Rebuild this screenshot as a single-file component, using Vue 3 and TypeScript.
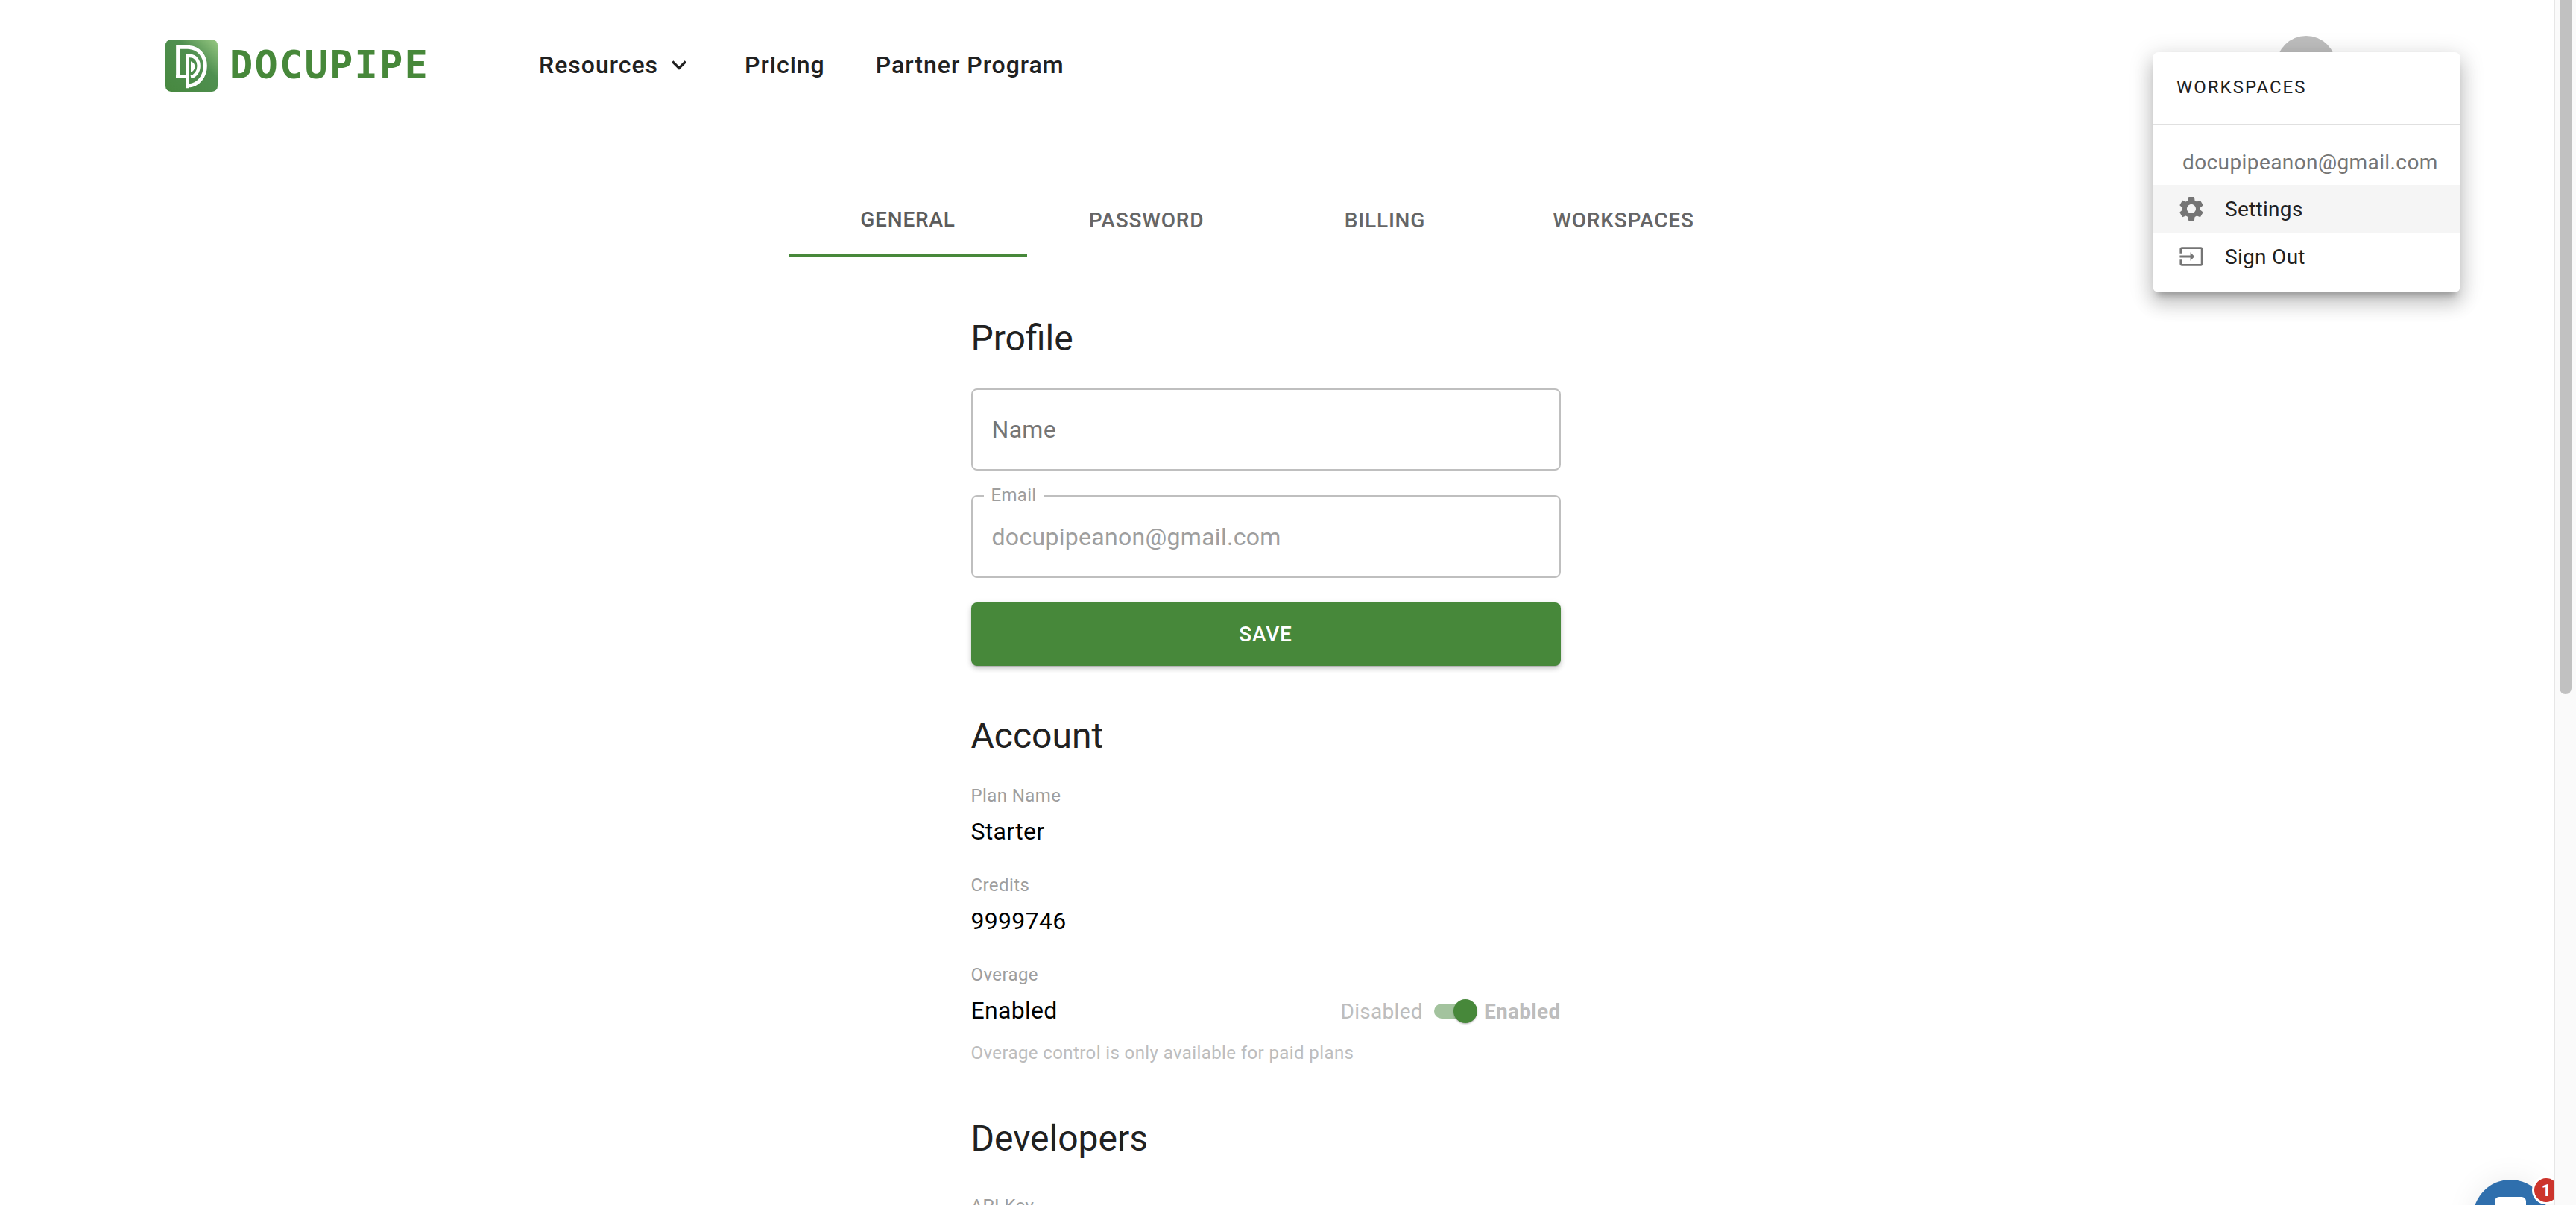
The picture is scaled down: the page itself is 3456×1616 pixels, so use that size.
<script setup lang="ts">
const navItems: string[] = ['Pricing', 'Partner Program']
const tabs: string[] = ['General', 'Password', 'Billing', 'Workspaces']
const gear =
  'M19.14 12.94c.04-.3.06-.61.06-.94 0-.32-.02-.64-.07-.94l2.03-1.58c.18-.14.23-.41.12-.61l-1.92-3.32c-.12-.22-.37-.29-.59-.22l-2.39.96c-.5-.38-1.03-.7-1.62-.94l-.36-2.54c-.04-.24-.24-.41-.48-.41h-3.84c-.24 0-.43.17-.47.41l-.36 2.54c-.59.24-1.13.57-1.62.94l-2.39-.96c-.22-.08-.47 0-.59.22L2.74 8.87c-.12.21-.08.47.12.61l2.03 1.58c-.05.3-.09.63-.09.94s.02.64.07.94l-2.03 1.58c-.18.14-.23.41-.12.61l1.92 3.32c.12.22.37.29.59.22l2.39-.96c.5.38 1.03.7 1.62.94l.36 2.54c.05.24.24.41.48.41h3.84c.24 0 .44-.17.47-.41l.36-2.54c.59-.24 1.13-.56 1.62-.94l2.39.96c.22.08.47 0 .59-.22l1.92-3.32c.12-.22.07-.47-.12-.61l-2.01-1.58zM12 15.6c-1.98 0-3.6-1.62-3.6-3.6s1.62-3.6 3.6-3.6 3.6 1.62 3.6 3.6-1.62 3.6-3.6 3.6z'
const input =
  'M21 3.01H3c-1.1 0-2 .9-2 2V9h2V4.99h18v14.03H3V15H1v4.01c0 1.1.9 1.98 2 1.98h18c1.1 0 2-.88 2-1.98v-14c0-1.11-.9-2-2-2zM11 16l4-4-4-4v3H1v2h10v3z'
</script>

<template>
  <div class="page">
    <main class="main">
      <header class="header">
        <div class="brand">
          <svg class="logo" viewBox="0 0 210 210" width="70" height="70">
            <defs>
              <linearGradient id="lg" x1="0" y1="1" x2="1" y2="0">
                <stop offset="0" stop-color="#47883f" />
                <stop offset="0.62" stop-color="#4f8f50" />
                <stop offset="1" stop-color="#97c882" />
              </linearGradient>
            </defs>
            <rect width="210" height="210" rx="22" fill="url(#lg)" />
            <path d="M50 148V31H90C135 31 160 68 160 106C160 148 132 186 88 186" fill="none" stroke="#fff" stroke-width="15" />
            <path d="M42 148H88V196M88 148V66H98C122 66 134 86 134 106C134 128 122 146 102 150" fill="none" stroke="#fff" stroke-width="13" />
            <path d="M102 88C112 92 118 98 118 109C118 120 112 128 102 132Z" fill="#fff" />
          </svg>
          <span class="wordmark">DOCUPIPE</span>
        </div>
        <nav class="nav">
          <a class="nav-link">
            Resources
            <svg class="chev" viewBox="0 0 24 24" width="40" height="40"><path d="M16.59 8.59 12 13.17 7.41 8.59 6 10l6 6 6-6z" fill="#212121" /></svg>
          </a>
          <a v-for="n in navItems" :key="n" class="nav-link">{{ n }}</a>
        </nav>
        <div class="avatar"></div>
      </header>

      <div class="center">
        <div class="tabs">
          <div v-for="(t, i) in tabs" :key="t" class="tab" :class="{ active: i === 0 }">{{ t }}</div>
        </div>

        <section class="form">
          <h2 class="h first">Profile</h2>
          <div class="field name"><span class="placeholder">Name</span></div>
          <div class="field email">
            <label class="notch">Email</label>
            <span class="disabled-val">docupipeanon@gmail.com</span>
          </div>
          <button class="save">Save</button>

          <h2 class="h account">Account</h2>
          <div class="info">
            <div class="lbl">Plan Name</div>
            <div class="val">Starter</div>
          </div>
          <div class="info">
            <div class="lbl">Credits</div>
            <div class="val">9999746</div>
          </div>
          <div class="info">
            <div class="lbl">Overage</div>
            <div class="val-row">
              <div class="val">Enabled</div>
              <div class="switch-row">
                <span class="off">Disabled</span>
                <span class="switch"><span class="track"></span><span class="thumb"></span></span>
                <span class="on">Enabled</span>
              </div>
            </div>
            <div class="hint">Overage control is only available for paid plans</div>
          </div>

          <h2 class="h dev">Developers</h2>
          <div class="lbl next">API Key</div>
        </section>
      </div>

      <div class="menu">
        <div class="menu-head">Workspaces</div>
        <div class="menu-body">
          <div class="menu-email">docupipeanon@gmail.com</div>
          <div class="menu-item hover">
            <span class="mi-icon"><svg viewBox="0 0 24 24" width="40" height="40"><path :d="gear" fill="#757575" /></svg></span>
            Settings
          </div>
          <div class="menu-item">
            <span class="mi-icon"><svg viewBox="0 0 24 24" width="34" height="34"><path :d="input" fill="#757575" /></svg></span>
            Sign Out
          </div>
        </div>
      </div>

      <div class="chat">
        <span class="chat-glyph"></span>
      </div>
      <span class="badge">1</span>
    </main>
    <aside class="scrollbar"><span class="sb-thumb"></span></aside>
  </div>
</template>

<style>
html, body { margin: 0; background: #fff; overflow: hidden; }
</style>

<style scoped>
.page {
  display: flex;
  width: 100%;
  height: 1616px;
  overflow: hidden;
  font-family: Roboto, "Liberation Sans", sans-serif;
  color: #212121;
  background: #fff;
}
.main {
  position: relative;
  flex: 1;
  min-width: 0;
  overflow: hidden;
}
.header {
  display: flex;
  align-items: center;
  height: 174px;
  padding-left: 222px;
  position: relative;
}
.brand {
  display: flex;
  align-items: center;
  gap: 16px;
  width: 501px;
}
.logo { flex: none; margin-top: 2px; }
.wordmark {
  font-family: "DejaVu Sans Mono", monospace;
  font-weight: 700;
  font-size: 52px;
  letter-spacing: 2.2px;
  color: #47883a;
  line-height: 1;
}
.nav { display: flex; align-items: center; gap: 68px; }
.nav-link {
  display: inline-flex;
  align-items: center;
  font-size: 32px;
  font-weight: 500;
  letter-spacing: 1px;
  color: #212121;
}
.chev { margin-left: 8px; }
.avatar {
  position: absolute;
  left: 3054px;
  top: 48px;
  width: 80px;
  height: 80px;
  border-radius: 50%;
  background: #bdbdbd;
}
.center {
  display: flex;
  flex-direction: column;
  align-items: center;
  padding-right: 30px;
  margin-top: 74px;
}
.tabs { display: flex; width: 1280px; }
.tab {
  width: 320px;
  height: 96px;
  display: flex;
  align-items: center;
  justify-content: center;
  font-size: 28px;
  font-weight: 500;
  letter-spacing: 0.8px;
  text-transform: uppercase;
  color: #666;
  box-sizing: border-box;
  padding-bottom: 2px;
}
.tab.active { border-bottom: 4px solid #47883a; padding-bottom: 0; color: #5c5c5c; }
.form { width: 791px; display: flex; flex-direction: column; }
.h {
  margin: 0;
  font-size: 48px;
  font-weight: 400;
  line-height: 64px;
  color: #212121;
}
.h.first { margin-top: 78px; }
.h.account { margin-top: 62px; }
.h.dev { margin-top: 63px; }
.field {
  position: relative;
  box-sizing: border-box;
  height: 110px;
  border: 2px solid #bfbfbf;
  border-radius: 8px;
  display: flex;
  align-items: center;
  padding-left: 26px;
  font-size: 32px;
  letter-spacing: 0.3px;
}
.field.name { margin-top: 35px; }
.field.email { margin-top: 33px; height: 111px; }
.placeholder { color: #757575; }
.disabled-val { color: #9e9e9e; }
.notch {
  position: absolute;
  left: 15px;
  top: -16px;
  padding: 0 10px;
  background: #fff;
  font-size: 24px;
  line-height: 28px;
  color: #9e9e9e;
}
.save {
  margin-top: 33px;
  height: 85px;
  border: 0;
  border-radius: 8px;
  background: #47883a;
  color: #fff;
  font: 500 28px Roboto, sans-serif;
  letter-spacing: 0.8px;
  text-transform: uppercase;
  box-shadow: 0 3px 2px -2px rgba(0,0,0,.2), 0 4px 6px rgba(0,0,0,.14), 0 2px 10px rgba(0,0,0,.1);
}
.info { margin-top: 28px; }
.lbl {
  font-size: 24px;
  line-height: 40px;
  letter-spacing: 0.4px;
  color: #9e9e9e;
}
.val {
  margin-top: 4px;
  font-size: 32px;
  line-height: 48px;
  letter-spacing: 0.3px;
  color: #000;
}
.val-row { display: flex; justify-content: space-between; align-items: center; }
.switch-row {
  display: flex;
  align-items: center;
  font-size: 28px;
  letter-spacing: 0.3px;
  color: #bdbdbd;
  margin-top: 6px;
}
.on { font-weight: 700; margin-left: 9px; }
.switch { position: relative; width: 58px; height: 32px; margin-left: 15px; display: block; }
.track {
  position: absolute;
  left: 0;
  top: 6px;
  width: 52px;
  height: 20px;
  border-radius: 10px;
  background: #a3c39e;
}
.thumb {
  position: absolute;
  right: 0;
  top: 0;
  width: 32px;
  height: 32px;
  border-radius: 50%;
  background: #47883a;
  box-shadow: 0 2px 2px -1px rgba(0,0,0,.25), 0 1px 3px rgba(0,0,0,.14);
}
.hint {
  margin-top: 13px;
  font-size: 24px;
  line-height: 40px;
  letter-spacing: 0.4px;
  color: #bdbdbd;
}
.next { margin-top: 38px; }
.menu {
  position: absolute;
  left: 2888px;
  top: 70px;
  width: 413px;
  height: 322px;
  background: #fff;
  border-radius: 8px;
  box-shadow: 0 10px 10px -6px rgba(0,0,0,.25), 0 16px 24px 2px rgba(0,0,0,.14), 0 6px 30px 5px rgba(0,0,0,.12);
}
.menu-head {
  box-sizing: border-box;
  height: 98px;
  border-bottom: 2px solid #e0e0e0;
  padding: 30px 0 0 32px;
  font-size: 24px;
  line-height: 34px;
  letter-spacing: 2px;
  text-transform: uppercase;
  color: #212121;
}
.menu-email {
  height: 80px;
  box-sizing: border-box;
  padding: 30px 0 0 40px;
  font-size: 28px;
  line-height: 40px;
  letter-spacing: 0.4px;
  color: #757575;
}
.menu-item {
  display: flex;
  align-items: center;
  height: 64px;
  padding-left: 32px;
  font-size: 28px;
  letter-spacing: 0.3px;
  color: #212121;
}
.menu-item.hover { background: #f5f5f5; }
.mi-icon {
  width: 40px;
  height: 40px;
  margin-right: 25px;
  display: flex;
  align-items: center;
  justify-content: center;
}
.chat {
  position: absolute;
  left: 3318px;
  top: 1582px;
  width: 100px;
  height: 100px;
  border-radius: 50%;
  background: #2f6fad;
  box-shadow: 0 0 40px rgba(0,0,0,.08);
  display: flex;
  justify-content: center;
}
.chat-glyph {
  margin-top: 23px;
  width: 42px;
  height: 40px;
  border-radius: 6px;
  background: #fff;
}
.badge {
  position: absolute;
  left: 3400px;
  top: 1580px;
  width: 32px;
  height: 32px;
  border-radius: 50%;
  background: #cc342c;
  border: 3px solid #fff;
  margin: -3px;
  display: flex;
  align-items: center;
  justify-content: center;
  color: #fff;
  font-size: 22px;
  font-weight: 700;
}
.scrollbar {
  flex: none;
  position: relative;
  box-sizing: border-box;
  width: 30px;
  border-left: 2px solid #e6e6e6;
  background: #fafafa;
}
.sb-thumb {
  position: absolute;
  left: 6px;
  top: -10px;
  width: 16px;
  height: 941px;
  border-radius: 8px;
  background: #c1c1c1;
}
</style>
